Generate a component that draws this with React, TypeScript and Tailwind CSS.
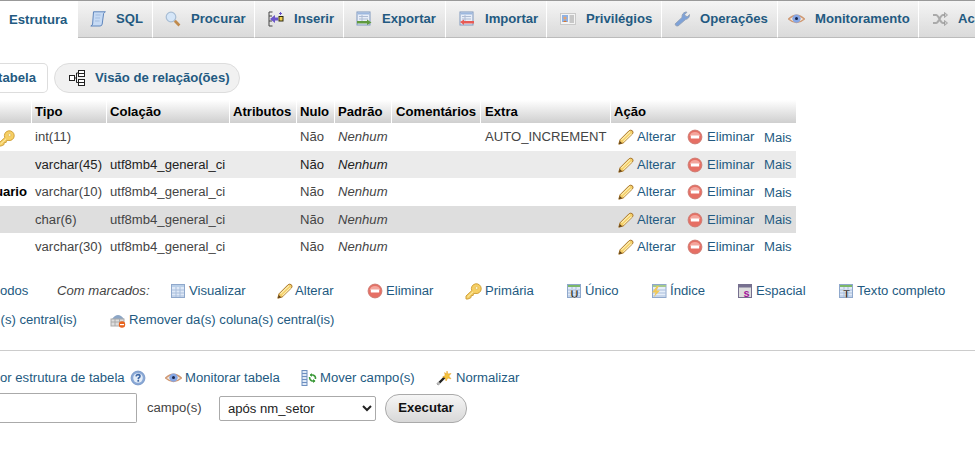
import React from "react";

const Pencil = () => (
  <svg width="16" height="16" viewBox="0 0 16 16" className="shrink-0">
    <path d="M0.8 15.2 L2 10.8 L11.2 1.6 Q12.8 0.6 14.4 1.8 Q15.6 3.2 14.6 4.8 L5.2 14 Z" fill="#f5cf68" stroke="#a8752b" strokeWidth="1" />
    <path d="M3.4 10.8 L12 2.6 M5.4 12.6 L13.6 4.6" stroke="#fdf0b8" strokeWidth="1.1" fill="none" />
    <path d="M0.8 15.2 L1.8 12 L4.2 14.2 Z" fill="#5f4018" />
  </svg>
);
const Minus = () => (
  <svg width="16" height="16" viewBox="0 0 16 16" className="shrink-0">
    <circle cx="8" cy="8" r="6.9" fill="#e66f64" stroke="#cf7d74" />
    <path d="M2.6 7 A5.6 5.6 0 0 1 13.4 7 Z" fill="#f3a59c" />
    <rect x="3.8" y="6.4" width="8.4" height="3.2" rx="0.6" fill="#fff" />
  </svg>
);
const Key = ({ cls = "" }: { cls?: string }) => (
  <svg width="17" height="17" viewBox="0 0 17 17" className={"shrink-0 " + cls}>
    <path d="M1 13 L6.8 7.6 A4.9 4.9 0 1 1 10 10.4 L8.4 10.6 L8.2 12.4 L6.2 12.6 L6 14.6 L3 16 L1 16 Z" fill="#f6cf63" stroke="#d0a13c" />
    <circle cx="11.6" cy="5" r="1.4" fill="#fff6cf" stroke="#d0a13c" strokeWidth="0.5" />
    <path d="M2.5 14 L8 8.8" stroke="#fdeeb0" />
  </svg>
);
const TableBase = ({ head = "#7cb868", children }: { head?: string; children?: React.ReactNode }) => (
  <svg width="16" height="16" viewBox="0 0 16 16" className="shrink-0">
    <rect x="1.5" y="1.5" width="13" height="13" fill="#dfe9f7" stroke="#8fa8cc" />
    <rect x="2" y="2" width="12" height="2" fill={head} />
    <path d="M2 7 H14 M2 10 H14 M2 13 H14 M6 4 V14 M10 4 V14" stroke="#a9bedc" strokeWidth="1" />
    {children}
  </svg>
);
const Eye = () => (
  <svg width="17" height="16" viewBox="0 0 17 16" className="shrink-0">
    <path d="M0.5 8 Q8.5 0.5 16.5 8 Q8.5 15 0.5 8 Z" fill="#f5e7da" stroke="#cf9872" strokeWidth="1.3" />
    <circle cx="8.5" cy="7.6" r="4.2" fill="#86a6e4" />
    <circle cx="8.5" cy="7.6" r="1.5" fill="#18244a" />
  </svg>
);
const Help = () => (
  <svg width="16" height="16" viewBox="0 0 16 16" className="shrink-0">
    <circle cx="8" cy="8" r="6.9" fill="#8aa9d6" stroke="#7d9ccb" />
    <circle cx="8" cy="8" r="4.8" fill="#e4edf8" />
    <path d="M6 6.4 Q6.2 4.6 8 4.6 Q10 4.6 10 6.2 Q10 7.3 8.6 7.9 L8.2 9.2" stroke="#3f69a6" strokeWidth="1.6" fill="none" />
    <rect x="7.4" y="10" width="1.7" height="1.7" fill="#3f69a6" />
  </svg>
);

const SqlIcon = () => (
  <svg width="16" height="16" viewBox="0 0 16 16" className="shrink-0">
    <path d="M3.5 0.8 H15.4 Q14.6 1 13.6 2.6 L12.2 13 Q12 15 10 15 H0.8 Q2.4 14.5 2.6 13 Z" fill="#c6daf4" stroke="#5f86bd" />
    <path d="M5.5 4 H10.5 M5.2 7 H10 M5 10 H9.6" stroke="#a3bde0" />
  </svg>
);
const SearchIcon = () => (
  <svg width="16" height="16" viewBox="0 0 16 16" className="shrink-0">
    <circle cx="6" cy="6" r="4.8" fill="#d5e6f8" stroke="#a8bdd4" strokeWidth="1.2" />
    <path d="M9.8 9.8 L14.4 14.4" stroke="#c08a4c" strokeWidth="2.8" />
  </svg>
);
const InsertIcon = () => (
  <svg width="16" height="16" viewBox="0 0 16 16" className="shrink-0">
    <path d="M4.5 1 H1 V15 H4.5 M1 5 H4 M1 10 H4" stroke="#444" fill="none" />
    <path d="M2 8 L7 4 V6.5 H10 V9.5 H7 V12 Z" fill="#6a55c9" />
    <rect x="11" y="5.5" width="4" height="4.5" fill="#f0cf4f" stroke="#2d2a10" />
    <path d="M12.5 1 V4 M11 2.5 H14" stroke="#6a55c9" />
  </svg>
);
const ExportIcon = ({ flip = false }: { flip?: boolean }) => (
  <svg width="16" height="16" viewBox="0 0 16 16" className="shrink-0">
    <rect x="1" y="1" width="13" height="13" fill="#e8eef8" stroke="#7f97bd" />
    <rect x="1.5" y="1.5" width="12" height="2" fill="#9db8de" />
    <path d="M3 5.5 H12 M3 8 H12 M6 4 V10" stroke="#aebcd4" />
    {flip ? (
      <path d="M1 11 L5 8.5 V10 H15 V12.5 H5 V14 Z" fill="#e75b55" />
    ) : (
      <path d="M1 10 H11 V8.5 L15.5 11.5 L11 14 V12.5 H1 Z" fill="#5f9a3e" />
    )}
  </svg>
);
const PrivIcon = () => (
  <svg width="16" height="16" viewBox="0 0 16 16" className="shrink-0">
    <rect x="0.5" y="2.5" width="15" height="11" fill="#f4f4f4" stroke="#c9c9c9" />
    <rect x="2" y="4" width="6" height="7" fill="#8db2e6" />
    <circle cx="5" cy="7" r="1.6" fill="#e6a36d" />
    <path d="M3 11 Q5 8 7 11 Z" fill="#d9772f" />
    <path d="M9.5 5 H14 M9.5 7 H14 M9.5 9 H14 M9.5 11 H14" stroke="#9a9a9a" />
  </svg>
);
const WrenchIcon = () => (
  <svg width="16" height="16" viewBox="0 0 16 16" className="shrink-0">
    <path d="M1 13 L8 6.4 Q7.6 2.2 11.6 1 L13 1.2 L10.7 3.5 L11.6 5.2 L13.6 5.6 L15.5 3.5 Q15.8 7.5 11.5 8.6 L4 15 Q1.5 15.6 1 13 Z" fill="#7ea2d8" stroke="#8f9db3" strokeWidth="0.8" />
  </svg>
);
const ShuffleIcon = () => (
  <svg width="16" height="16" viewBox="0 0 16 16" className="shrink-0">
    <path d="M1 4 H4 C7 4 8 12 11 12 H13 M1 12 H4 C7 12 8 4 11 4 H13" stroke="#aaa" strokeWidth="2" fill="none" />
    <path d="M12.5 1.5 L15.5 4 L12.5 6.5 Z M12.5 9.5 L15.5 12 L12.5 14.5 Z" fill="#ccc" stroke="#888" strokeWidth="0.6" />
  </svg>
);
const RelationIcon = () => (
  <svg width="16" height="16" viewBox="0 0 16 16" className="shrink-0">
    <g fill="#fff" stroke="#222">
      <rect x="0.5" y="5.5" width="5" height="5" />
      <rect x="9.5" y="0.5" width="6" height="6" />
      <rect x="9.5" y="9.5" width="6" height="6" />
    </g>
    <path d="M5.5 8 H7.5 V3 H9.5 M7.5 8 V12.5 H9.5 M9.5 3.5 H15.5 M9.5 12.5 H15.5" stroke="#222" fill="none" />
  </svg>
);
const CentralIcon = () => (
  <svg width="16" height="16" viewBox="0 0 16 16" className="shrink-0">
    <path d="M2 7 Q8 -1 14 7 Z" fill="#8ca6c6" />
    <rect x="1" y="7" width="13" height="7" fill="#ddd" stroke="#aaa" />
    <path d="M1 10 H14 M5 7 V14 M9.5 7 V14" stroke="#aaa" />
    <circle cx="12" cy="12.5" r="3.2" fill="#e8641f" />
    <rect x="10" y="12" width="4" height="1.2" fill="#fff" />
  </svg>
);
const MoveIcon = () => (
  <svg width="16" height="16" viewBox="0 0 16 16" className="shrink-0">
    <rect x="1" y="0.5" width="5" height="15" fill="#dfe9f7" stroke="#6d8fc0" />
    <path d="M1 3.5 H6 M1 6.5 H6 M1 9.5 H6 M1 12.5 H6" stroke="#6d8fc0" />
    <path d="M9 5 H12 Q15 6 14.5 9 M14 11 H11 Q8.5 10 8.5 7" stroke="#3d9a3a" strokeWidth="1.5" fill="none" />
    <path d="M11 3 L9 5 L11 7 Z M12 9 L14.5 11 L12 13 Z" fill="#3d9a3a" />
  </svg>
);
const WandIcon = () => (
  <svg width="16" height="16" viewBox="0 0 16 16" className="shrink-0">
    <path d="M1.5 14.5 L9 7" stroke="#222" strokeWidth="2.4" />
    <path d="M1.5 14.5 L3.5 12.5" stroke="#bbb" strokeWidth="2.4" />
    <path d="M11 1 L11.8 4 L15 3.5 L12.8 6 L15 8.8 L11.8 8 L10 11 L9.4 8 L6.6 7 L9.2 5.4 L8.6 2.6 L10.5 4 Z" fill="#f5c33b" stroke="#e39a1f" strokeWidth="0.5" />
  </svg>
);

const Tab = ({ w, icon, label, active, pl = "pl-[12px]" }: { w: string; icon?: React.ReactNode; label: string; active?: boolean; pl?: string }) => (
  <div
    className={
      w + " " + pl + " flex h-[37px] shrink-0 items-center gap-[10px] overflow-hidden whitespace-nowrap font-bold text-[#235a81] " +
      (active ? "bg-white" : "border-b border-r border-b-[#bbb] border-r-white bg-gradient-to-b from-[#f5f5f5] to-[#dadada]")
    }
  >
    {icon}
    <span>{label}</span>
  </div>
);

const rows = [
  { name: "", key: true, type: "int(11)", coll: "", extra: "AUTO_INCREMENT", bg: "bg-white text-[#444]", h: "h-[28px]" },
  { name: "", type: "varchar(45)", coll: "utf8mb4_general_ci", extra: "", bg: "bg-[#ebebeb] text-[#222]", h: "h-[27px]" },
  { name: "uario", type: "varchar(10)", coll: "utf8mb4_general_ci", extra: "", bg: "bg-white text-[#444]", h: "h-[28px]" },
  { name: "", type: "char(6)", coll: "utf8mb4_general_ci", extra: "", bg: "bg-[#dedede] text-[#444]", h: "h-[27px]" },
  { name: "", type: "varchar(30)", coll: "utf8mb4_general_ci", extra: "", bg: "bg-white text-[#444]", h: "h-[27px]" },
];

const headers: [string, string][] = [
  ["", "w-[31px] pl-[3px]"],
  ["Tipo", "w-[75px] pl-[3px]"],
  ["Colação", "w-[123px] pl-[3px]"],
  ["Atributos", "w-[67px] pl-[3px]"],
  ["Nulo", "w-[38px] pl-[3px]"],
  ["Padrão", "w-[57px] pl-[3px]"],
  ["Comentários", "w-[89px] pl-[4px]"],
  ["Extra", "w-[130px] pl-[4px]"],
  ["Ação", "w-[185px] pl-[3px]"],
];

const Action = ({ icon, label, cls = "" }: { icon: React.ReactNode; label: string; cls?: string }) => (
  <span className={"flex items-center whitespace-nowrap text-[#235a81] " + cls}>
    {icon}
    <span>{label}</span>
  </span>
);

export default function App() {
  return (
    <div
      className="h-[457px] w-[975px] overflow-hidden bg-white text-[13.12px] leading-[18px] text-[#444]"
      style={{ fontFamily: '"Liberation Sans", Arial, sans-serif' }}
    >
      <nav className="flex w-[1000px] border-t border-[#999]">
        <Tab w="w-[78px]" label="Estrutura" active pl="pl-[9px]" />
        <Tab w="w-[75px]" icon={<SqlIcon />} label="SQL" />
        <Tab w="w-[102px]" icon={<SearchIcon />} label="Procurar" />
        <Tab w="w-[89px]" icon={<InsertIcon />} label="Inserir" pl="pl-[13px]" />
        <Tab w="w-[102px]" icon={<ExportIcon />} label="Exportar" />
        <Tab w="w-[101px]" icon={<ExportIcon flip />} label="Importar" pl="pl-[13px]" />
        <Tab w="w-[115px]" icon={<PrivIcon />} label="Privilégios" pl="pl-[13px]" />
        <Tab w="w-[116px]" icon={<WrenchIcon />} label="Operações" />
        <Tab w="w-[141px]" icon={<Eye />} label="Monitoramento" pl="pl-[10px]" />
        <Tab w="w-[80px]" icon={<ShuffleIcon />} label="Acompanhamento" pl="pl-[13px]" />
      </nav>

      <div className="mt-[25px] flex h-[30px] items-center">
        <div className="flex h-[30px] w-[48px] items-center justify-end rounded-r-[5px] border border-l-0 border-[#ddd] bg-white pr-[11px] font-bold text-[#235a81]">
          tabela
        </div>
        <div className="ml-[6px] flex h-[30px] w-[186px] items-center gap-[10px] rounded-[15px] border border-[#ddd] bg-[#f1f1f1] pl-[14px] font-bold text-[#235a81]">
          <RelationIcon />
          <span className="whitespace-nowrap">Visão de relação(ões)</span>
        </div>
      </div>

      <div className="mt-[7px] w-[796px]">
        <div className="flex h-[23px] bg-gradient-to-b from-white to-[#cfcfcf] font-bold text-black">
          {headers.map(([h, w], i) => (
            <div key={i} className={w + " flex items-center whitespace-nowrap " + (i > 0 ? "border-l border-white" : "")}>
              {h}
            </div>
          ))}
        </div>
        {rows.map((r, i) => (
          <div key={i} className={"flex items-center " + r.h + " " + r.bg}>
            <div className="flex w-[31px] justify-end whitespace-nowrap pr-[4px] font-bold text-black">
              {r.key ? <Key cls="mr-[12px] mt-[2px]" /> : r.name}
            </div>
            <div className="w-[75px] pl-[4px]">{r.type}</div>
            <div className="w-[123px] whitespace-nowrap pl-[4px]">{r.coll}</div>
            <div className="w-[67px]" />
            <div className="w-[38px] pl-[4px]">Não</div>
            <div className="w-[57px] pl-[4px] italic">Nenhum</div>
            <div className="w-[89px]" />
            <div className="w-[130px] pl-[5px]">{r.extra}</div>
            <div className="flex w-[185px] items-center pl-[8px]">
              <Action icon={<Pencil />} label="Alterar" cls="w-[69px] gap-[3px]" />
              <Action icon={<Minus />} label="Eliminar" cls="w-[76px] gap-[4px]" />
              <span className="pl-[1px] pt-[1px] text-[#235a81]">Mais</span>
            </div>
          </div>
        ))}
      </div>

      <div className="mt-[22px] flex h-[18px] items-center whitespace-nowrap">
        <span className="w-[57px] text-[#235a81]">odos</span>
        <span className="w-[113px] italic">Com marcados:</span>
        <Action icon={<TableBase head="#b9cfe8" />} label="Visualizar" cls="w-[107px] gap-[3px]" />
        <Action icon={<Pencil />} label="Alterar" cls="w-[90px] gap-[2px]" />
        <Action icon={<Minus />} label="Eliminar" cls="w-[98px] gap-[3px]" />
        <Action icon={<Key />} label="Primária" cls="w-[101px] gap-[3px]" />
        <Action
          icon={
            <TableBase>
              <text x="8.5" y="14.5" fontSize="11" fontWeight="700" textAnchor="middle" fill="#111" stroke="#fff" strokeWidth="0.3">U</text>
            </TableBase>
          }
          label="Único"
          cls="w-[85px] gap-[3px]"
        />
        <Action
          icon={
            <svg width="16" height="16" viewBox="0 0 16 16" className="shrink-0">
              <rect x="1.5" y="1.5" width="13.5" height="13" fill="#e6eef9" stroke="#8fa8cc" />
              <rect x="2" y="2" width="13" height="2" fill="#a5c98d" />
              <path d="M2 7 H15 M2 10 H15 M2 13 H15" stroke="#a9bedc" />
              <path d="M6 3 L1 9.5 H4.5 L3 14 L9 7.5 H5.5 L8 3 Z" fill="#f0c95a" />
            </svg>
          }
          label="Índice"
          cls="w-[86px] gap-[3px]"
        />
        <Action
          icon={
            <svg width="16" height="16" viewBox="0 0 16 16" className="shrink-0">
              <rect x="1.5" y="1.5" width="13" height="13" fill="#ddd" stroke="#76708f" />
              <rect x="2" y="1.5" width="12" height="3" fill="#76708f" />
              <text x="9.5" y="14" fontSize="11" fontWeight="700" textAnchor="middle" fill="#a3139b">s</text>
            </svg>
          }
          label="Espacial"
          cls="w-[101px] gap-[3px]"
        />
        <Action
          icon={
            <TableBase>
              <text x="8.5" y="14.5" fontSize="11" fontWeight="700" textAnchor="middle" fill="#111" stroke="#fff" strokeWidth="0.3">T</text>
            </TableBase>
          }
          label="Texto completo"
          cls="gap-[3px]"
        />
      </div>

      <div className="mt-[11px] flex h-[18px] items-center whitespace-nowrap text-[#235a81]">
        <span className="w-[77px] text-right">(s) central(is)</span>
        <Action icon={<CentralIcon />} label="Remover da(s) coluna(s) central(is)" cls="ml-[33px] gap-[3px]" />
      </div>

      <div className="mt-[21px] border-t border-[#ccc]" />

      <div className="mt-[18px] flex h-[18px] items-center whitespace-nowrap text-[#235a81]">
        <span className="w-[121px] text-right">or estrutura de tabela</span>
        <span className="ml-[9px] w-[35px]"><Help /></span>
        <Action icon={<Eye />} label="Monitorar tabela" cls="w-[136px] gap-[3px]" />
        <Action icon={<MoveIcon />} label="Mover campo(s)" cls="w-[135px] gap-[3px]" />
        <Action icon={<WandIcon />} label="Normalizar" cls="gap-[4px]" />
      </div>

      <div className="mt-[6px] flex h-[30px] items-center">
        <input
          aria-label="campos"
          className="h-[30px] w-[137px] rounded-r-[2px] border border-l-0 border-[#aaa] bg-white outline-none"
          defaultValue=""
        />
        <span className="ml-[10px] w-[72px]">campo(s)</span>
        <select
          aria-label="posição"
          defaultValue="após nm_setor"
          className="h-[25px] w-[157px] rounded-[2px] border border-[#aaa] bg-white pl-[4px] text-[#222]"
        >
          <option>após nm_setor</option>
        </select>
        <button className="ml-[9px] h-[29px] w-[82px] rounded-[14px] border border-[#aaa] bg-gradient-to-b from-[#f6f6f6] to-[#d8d8d8] font-bold text-[#111]">
          Executar
        </button>
      </div>
    </div>
  );
}
